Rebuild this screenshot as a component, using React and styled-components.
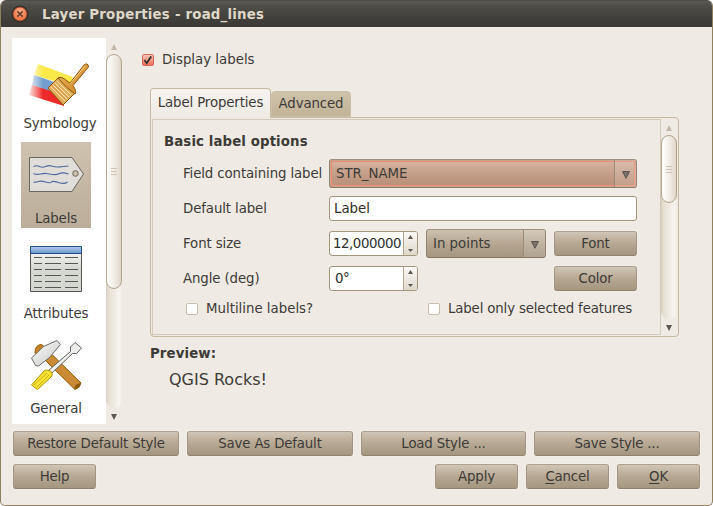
import React from "react";
import styled, { createGlobalStyle, css } from "styled-components";

const GlobalStyle = createGlobalStyle`
  * { box-sizing: border-box; }
  html, body { margin: 0; padding: 0; background: #fff; }
  body { font: 13.33px/16px "DejaVu Sans", sans-serif; color: #3c3b37; overflow: hidden; }
  svg { display: block; flex: none; }
`;

const Window = styled.main`
  width: 713px;
  height: 506px;
  display: flex;
  flex-direction: column;
  border: 1px solid #8f8060;
  border-top: 0;
  border-radius: 6px 6px 5px 5px;
  background: #efeae3;
  overflow: hidden;
  white-space: nowrap;
`;

const TitleBar = styled.header`
  height: 27px;
  flex: none;
  margin: 0 -1px;
  display: flex;
  align-items: center;
  gap: 13px;
  padding: 1px 0 0 11px;
  background: linear-gradient(#42413c 0, #5b5953 1px, #514f49 5px, #3d3c38 22px, #3b3a36);
  color: #dfd8c8;
  font-weight: bold;
`;

const WindowTitle = styled.h1`
  margin: 0;
  padding-top: 2px;
  font: inherit;
  letter-spacing: 0.215px;
`;

const Body = styled.div`
  height: 386px;
  flex: none;
  margin-top: 11px;
  padding-left: 11px;
  display: flex;
`;

const Sidebar = styled.nav`
  width: 94px;
  padding: 9px 0 0 9px;
  display: flex;
  flex-direction: column;
  align-items: flex-start;
  gap: 9px;
  background: #fff;
`;

const NavItem = styled.div`
  width: ${(p) => p.$width || 70}px;
  height: 86px;
  flex: none;
  display: flex;
  flex-direction: column;
  align-items: center;
  justify-content: space-between;
  padding-bottom: 1px;
  letter-spacing: -0.12px;
  ${(p) => p.$selected && css`background: linear-gradient(#cfc2ae, #c4b7a4 50%, #bbad9a);`}
`;

const ScrollColumn = styled.div`
  width: 16px;
  flex: none;
  display: flex;
  flex-direction: column;
  align-items: center;
`;

const ScrollArrow = styled.div`
  height: ${(p) => p.$height}px;
  flex: none;
  display: flex;
  align-items: center;
  justify-content: center;
  padding-top: 1px;
`;

const Trough = styled.div`
  width: 16px;
  flex: 1;
  border-radius: 8px;
  background: linear-gradient(90deg, #d8cebf, #e6dfd2 15%, #f8f5f1 85%, #eee8df);
`;

const Thumb = styled.div`
  width: 16px;
  height: ${(p) => p.$height}px;
  border: 1px solid #b3a68c;
  border-radius: 8px;
  display: flex;
  align-items: center;
  justify-content: center;
  background: linear-gradient(90deg, #fffefd, #f9f7f3 25%, #e8e1d6 80%, #ded4c5);
`;

const Grip = styled.span`
  width: 6px;
  height: 7px;
  border: solid #cfc4b4;
  border-width: 1px 0;
  background: linear-gradient(transparent 2px, #cfc4b4 2px, #cfc4b4 3px, transparent 3px);
`;

const Content = styled.section`
  width: 537px;
  margin-left: 20px;
  display: flex;
  flex-direction: column;
`;

const CheckLabel = styled.label`
  display: flex;
  align-items: center;
  gap: 8px;
  width: ${(p) => (p.$width ? p.$width + "px" : "auto")};
  margin-left: ${(p) => p.$indent || 0}px;
  margin-top: ${(p) => p.$top || 0}px;
  letter-spacing: ${(p) => p.$track || 0}px;
`;

const CheckBox = styled.span`
  width: 12px;
  height: 12px;
  flex: none;
  border: 1px solid ${(p) => (p.$checked ? "#cf6953" : "#c8bdac")};
  border-radius: 2px;
  background: ${(p) => (p.$checked ? "linear-gradient(#fbc5b8, #f76f59)" : "#fff")};
`;

const Tabs = styled.div`
  display: flex;
  align-items: flex-end;
  height: 30px;
  margin: 20px 0 0 8px;
`;

const Tab = styled.button`
  width: ${(p) => p.$width}px;
  height: ${(p) => (p.$active ? 30 : 26)}px;
  padding: 0 0 2px;
  font: inherit;
  letter-spacing: -0.13px;
  color: inherit;
  border: 1px solid #c6b99f;
  border-radius: 4px 4px 0 0;
  ${(p) =>
    p.$active
      ? css`
          border-bottom: 0;
          background: linear-gradient(#f6f3ef, #efeae3);
          z-index: 1;
        `
      : css`
          margin-bottom: 1px;
          padding-bottom: 0;
          border-color: #cbbfa7;
          background: linear-gradient(#cfc3ac, #c2b397);
        `}
`;

const TabPanel = styled.div`
  width: 529px;
  height: 220px;
  flex: none;
  margin: -1px 0 0 8px;
  padding: 1px;
  display: flex;
  border: 1px solid #c6b99f;
  border-radius: 0 4px 4px 4px;
`;

const Form = styled.div`
  width: 509px;
  height: 216px;
  border: 1px solid #d5cab9;
  padding: 14px 0 0 11px;
`;

const Heading = styled.h2`
  margin: 0 0 ${(p) => p.$gap || 0}px;
  font: inherit;
  font-weight: bold;
  letter-spacing: 0.1px;
`;

const Row = styled.div`
  height: ${(p) => p.$height || 35}px;
  padding-left: 19px;
  display: flex;
  align-items: center;
`;

const FieldLabel = styled.span`
  width: 146px;
  flex: none;
  letter-spacing: -0.11px;
`;

const Combo = styled.div`
  width: ${(p) => p.$width}px;
  height: 29px;
  display: flex;
  border: 1px solid;
  border-color: #9f917d #94856f #867762;
  border-radius: 3px;
  margin-left: ${(p) => p.$left || 0}px;
  background: ${(p) =>
    p.$active ? "linear-gradient(#d8b5a3, #c49e88 50%, #b98f78)" : "linear-gradient(#cdc1b1, #b4a48f 55%, #a59680)"};
  ${(p) =>
    p.$active &&
    css`
      box-shadow: inset 0 0 0 1px #c9a590, inset 0 0 0 2px #ec8a74;
    `}
`;

const ComboText = styled.span`
  flex: 1;
  padding: 6px 0 0 6px;
`;

const ComboArrow = styled.span`
  width: 22px;
  border-left: 1px solid #9b8b76;
  display: flex;
  align-items: center;
  justify-content: center;
  padding-top: 3px;
  background: rgba(255, 255, 255, 0.14);
`;

const Input = styled.div`
  width: 308px;
  height: 25px;
  padding: 4px 4px 0;
  border: 1px solid #a3967c;
  border-radius: 3px;
  background: #fff;
  color: #2e2d2a;
`;

const Spin = styled.div`
  width: 89px;
  height: 25px;
  display: flex;
  border: 1px solid #a3967c;
  border-radius: 3px;
  background: #fff;
  overflow: hidden;
  color: #2e2d2a;
`;

const SpinValue = styled.span`
  width: 73px;
  padding: 4px 0 0 ${(p) => p.$pad || 4}px;
  letter-spacing: -0.45px;
`;

const SpinButtons = styled.span`
  width: 14px;
  border-left: 1px solid #b3a78f;
  background: linear-gradient(#fbfaf8, #dfd7ca);
  display: flex;
  flex-direction: column;
  align-items: center;
  justify-content: space-between;
  padding: 3px 0;
`;

const Button = styled.button`
  width: ${(p) => p.$width || 83}px;
  height: 25px;
  flex: none;
  padding: 1px 0 0;
  margin-left: ${(p) => p.$left || 0}px;
  font: inherit;
  letter-spacing: -0.17px;
  color: #3c3b37;
  border: 1px solid;
  border-color: #ada08d #a29481 #91826d;
  border-radius: 3px;
  background: linear-gradient(#d0c5b6, #b7a893 50%, #a59680);
  box-shadow: 0 0 0 1px rgba(255, 255, 255, 0.15);
`;

const Mnemonic = styled.span`
  text-decoration: underline;
  text-decoration-thickness: 1px;
  text-underline-offset: 2px;
`;

const PreviewTitle = styled(Heading)`
  margin: 9px 0 0 8px;
`;

const PreviewText = styled.p`
  margin: 9px 0 0 27px;
  font-size: 16px;
  line-height: 18px;
`;

const Footer = styled.footer`
  display: flex;
  gap: 8px;
  padding: 0 12px;
  margin-top: ${(p) => p.$top}px;
`;

function Arrow({ up, color = "#5d574e", w = 6, h = 6 }) {
  return (
    <svg width={w} height={h} viewBox="0 0 8 8" preserveAspectRatio="none">
      <path d={up ? "M0 8L4 0L8 8Z" : "M0 0H8L4 8Z"} fill={color} />
    </svg>
  );
}

function ComboMarker() {
  return (
    <svg width="8" height="8" viewBox="0 0 8 8">
      <path d="M.5.5H7.5L4 7.3Z" fill="#777169" stroke="#5c5750" />
    </svg>
  );
}

function CloseIcon() {
  return (
    <svg width="18" height="18" viewBox="0 0 18 18">
      <defs>
        <radialGradient id="close" cy=".3">
          <stop offset="0" stopColor="#fbb08a" />
          <stop offset="1" stopColor="#f07a4e" />
        </radialGradient>
      </defs>
      <circle cx="9" cy="9" r="8.5" fill="#302d29" />
      <circle cx="9" cy="9" r="7" fill="url(#close)" stroke="#873c24" strokeWidth=".8" />
      <path d="M6.400 6.400L11.600 11.600M11.600 6.400L6.400 11.600" stroke="#6b4030" strokeWidth="1.6" />
    </svg>
  );
}

function SymbologyIcon() {
  return (
    <svg width="78" height="66" viewBox="0 0 78 66">
      <defs>
        <linearGradient id="fade">
          <stop offset="0" stopColor="#fff" />
          <stop offset="1" stopColor="#fff" stopOpacity="0" />
        </linearGradient>
        <linearGradient id="wood" x2="1" y2="1">
          <stop offset="0" stopColor="#f0bd61" />
          <stop offset="1" stopColor="#c87c21" />
        </linearGradient>
      </defs>
      <path d="M17 17L52 30L49 39L13 28Z" fill="#fbe849" />
      <path d="M13 28L42 38L38 48L11 38Z" fill="#729fcf" />
      <path d="M11 38L42 48L43 59L8 48Z" fill="#ef2929" />
      <path d="M6 15H22V52H6Z" fill="url(#fade)" />
      <path d="M27 41L38 30L54 46L42 58Z" fill="#e5ae5c" stroke="#8f5509" />
      <path d="M30 40L44 54M32 38L46 52M34 36L48 50M36 34L50 48" stroke="#fbe3b0" />
      <path d="M28.500 42.500L42 56.500M31 39L45 53M33 37L47 51" stroke="#b9843c" strokeWidth=".5" />
      <path d="M37 31Q41 29 46 34L49 36L63 18Q67 15 67.500 20L52 38.500Q56 44 54 47Q46 42 37 31Z" fill="url(#wood)" stroke="#8f5509" />
      <path d="M49 37L64 19" stroke="#f6cf83" />
    </svg>
  );
}

function LabelIcon() {
  return (
    <svg width="70" height="66" viewBox="0 0 70 66">
      <path d="M8.500 15.500H51L62.500 32L51 49.500H8.500Z" fill="#e1ddd8" stroke="#69655f" />
      <circle cx="54.500" cy="31.500" r="2.8" fill="#cdbfaa" stroke="#69655f" />
      <path
        d="M12.500 24.500q3-1.500 6 0t6 0t6-.5t6 1t6-.5t5-.5M12.500 31.500q3 1.500 7 .5t6-.5t6 1t7-1t9 .5M12.500 40q3 .5 5-.5t7 .5t6 0t7 .5t9-.5"
        fill="none"
        stroke="#4e6d9e"
        strokeWidth="1.2"
      />
    </svg>
  );
}

function TableIcon() {
  return (
    <svg width="70" height="66" viewBox="0 0 70 66">
      <defs>
        <linearGradient id="head" x2="0" y2="1">
          <stop offset="0" stopColor="#b3cbeb" />
          <stop offset="1" stopColor="#6b98d0" />
        </linearGradient>
        <linearGradient id="sheet" x2="0" y2="1">
          <stop offset="0" stopColor="#f0f1ee" />
          <stop offset=".4" stopColor="#d6d9d2" />
          <stop offset="1" stopColor="#d3d7cf" />
        </linearGradient>
      </defs>
      <path d="M9.500 16.500H60.500V54.500H9.500Z" fill="url(#sheet)" stroke="#555753" />
      <path d="M9.500 9.500H60.500V16.500H9.500Z" fill="url(#head)" stroke="#204a87" />
      <path
        d="M13 20.500h8m3 0h16m4 0h13M13 26.500h8m3 0h16m4 0h13M13 32.500h8m3 0h16m4 0h13M13 38.500h8m3 0h16m4 0h13M13 44.500h8m3 0h16m4 0h13M13 50.500h8m3 0h16m4 0h13"
        stroke="#555753"
      />
    </svg>
  );
}

function ToolsIcon() {
  return (
    <svg width="70" height="66" viewBox="0 0 70 66">
      <defs>
        <linearGradient id="steel" x2="1" y2="1">
          <stop offset="0" stopColor="#fff" />
          <stop offset="1" stopColor="#c4c6c2" />
        </linearGradient>
      </defs>
      <path d="M24.500 28.500L31.500 23L60 51Q59 56 54 57.500Z" fill="#cd8a35" stroke="#8f5902" />
      <path d="M53.500 57Q53 52 59.500 51Q59 56 53.500 57Z" fill="#8f5902" />
      <path d="M14 21Q14 13 20 12.500Q23 13 23 16L16 22Z" fill="#c98125" stroke="#8f5902" />
      <path d="M10.500 26L22.500 14.500L36 8.500L39.500 12.500L28.500 25.500L17.500 34L14.500 33.500Z" fill="url(#steel)" stroke="#6b6d69" />
      <path d="M28 38L49.500 19.500V15L54 10.500L60.500 16L55.500 21.500L51.500 21.500L31 41Z" fill="#eeeeec" stroke="#60625e" />
      <path d="M10.500 53L23 39Q26 36.500 31 40.500Q32 43 30 45L16.500 57.500Z" fill="#f7e135" stroke="#b39500" />
      <path d="M13 53L26 41M16 55L28 43" stroke="#c3a500" strokeWidth=".8" />
    </svg>
  );
}

function ScrollBar({ top, bottom, thumb }) {
  return (
    <ScrollColumn>
      <ScrollArrow $height={top}>
        <Arrow up color="#c4b9a8" w={6} />
      </ScrollArrow>
      <Trough>
        <Thumb $height={thumb}>
          <Grip />
        </Thumb>
      </Trough>
      <ScrollArrow $height={bottom}>
        <Arrow />
      </ScrollArrow>
    </ScrollColumn>
  );
}

function SpinBox({ value, pad }) {
  return (
    <Spin>
      <SpinValue $pad={pad}>{value}</SpinValue>
      <SpinButtons>
        <Arrow up w={5} h={4} />
        <Arrow w={5} h={3} />
      </SpinButtons>
    </Spin>
  );
}

function ComboBox({ value, ...rest }) {
  return (
    <Combo {...rest}>
      <ComboText>{value}</ComboText>
      <ComboArrow>
        <ComboMarker />
      </ComboArrow>
    </Combo>
  );
}

export default function App() {
  return (
    <>
      <GlobalStyle />
      <Window>
        <TitleBar>
          <CloseIcon />
          <WindowTitle>Layer Properties - road_lines</WindowTitle>
        </TitleBar>
        <Body>
          <Sidebar>
            <NavItem $width={78}>
              <SymbologyIcon />
              Symbology
            </NavItem>
            <NavItem $selected>
              <LabelIcon />
              Labels
            </NavItem>
            <NavItem>
              <TableIcon />
              Attributes
            </NavItem>
            <NavItem>
              <ToolsIcon />
              General
            </NavItem>
          </Sidebar>
          <ScrollBar top={16} bottom={16} thumb={235} />
          <Content>
            <CheckLabel $top={14}>
              <CheckBox $checked>
                <svg width="11" height="11" viewBox="0 0 12 11">
                  <path d="M1.500 5L4 8.500L9 1" fill="none" stroke="#37332f" strokeWidth="2" />
                </svg>
              </CheckBox>
              Display labels
            </CheckLabel>
            <Tabs>
              <Tab $active $width={121}>Label Properties</Tab>
              <Tab $width={80}>Advanced</Tab>
            </Tabs>
            <TabPanel>
              <Form>
                <Heading $gap={6}>Basic label options</Heading>
                <Row>
                  <FieldLabel>Field containing label</FieldLabel>
                  <ComboBox $active $width={308} value="STR_NAME" />
                </Row>
                <Row>
                  <FieldLabel>Default label</FieldLabel>
                  <Input>Label</Input>
                </Row>
                <Row>
                  <FieldLabel>Font size</FieldLabel>
                  <SpinBox value="12,000000" pad={3} />
                  <ComboBox $width={120} $left={8} value="In points" />
                  <Button $left={8}>Font</Button>
                </Row>
                <Row>
                  <FieldLabel>Angle (deg)</FieldLabel>
                  <SpinBox value="0°" pad={5} />
                  <Button $left={136}>Color</Button>
                </Row>
                <Row $height={25}>
                  <CheckLabel $indent={3} $width={242}>
                    <CheckBox />
                    Multiline labels?
                  </CheckLabel>
                  <CheckLabel $track={-0.15}>
                    <CheckBox />
                    Label only selected features
                  </CheckLabel>
                </Row>
              </Form>
              <ScrollBar top={16} bottom={16} thumb={68} />
            </TabPanel>
            <PreviewTitle>Preview:</PreviewTitle>
            <PreviewText>QGIS Rocks!</PreviewText>
          </Content>
        </Body>
        <Footer $top={7}>
          <Button $width={166}>Restore Default Style</Button>
          <Button $width={166}>Save As Default</Button>
          <Button $width={165}>Load Style ...</Button>
          <Button $width={166}>Save Style ...</Button>
        </Footer>
        <Footer $top={8}>
          <Button>Help</Button>
          <Button $left={331}>Apply</Button>
          <Button><Mnemonic>C</Mnemonic>ancel</Button>
          <Button><Mnemonic>O</Mnemonic>K</Button>
        </Footer>
      </Window>
    </>
  );
}
